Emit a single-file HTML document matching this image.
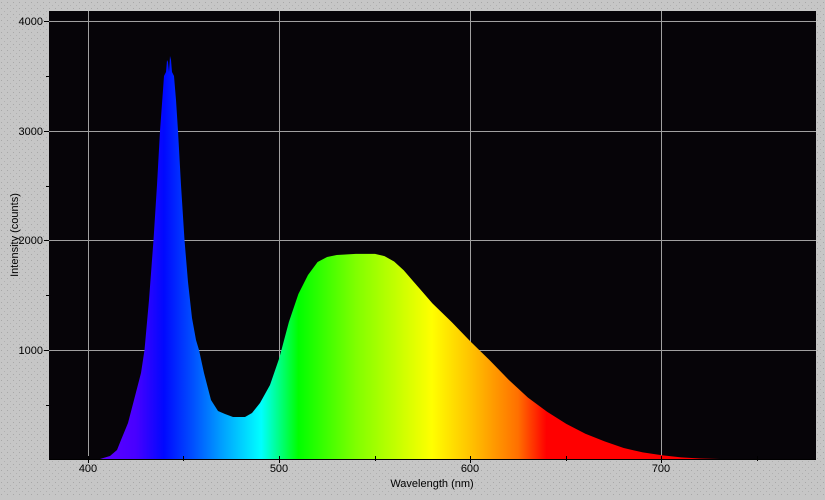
<!DOCTYPE html>
<html><head><style>
html,body{margin:0;padding:0;}
body{width:825px;height:495px;background:#c6c6c6;overflow:hidden;font-family:"Liberation Sans",sans-serif;}
</style></head><body>
<svg width="825" height="495" viewBox="0 0 825 495" xmlns="http://www.w3.org/2000/svg">
<defs>
<pattern id="dots" width="6" height="6" patternUnits="userSpaceOnUse">
<rect width="6" height="6" fill="#c6c6c6"/><rect x="1" y="2" width="1" height="1" fill="#a8a8a8"/><rect x="4" y="5" width="1" height="1" fill="#b0b0b0"/>
</pattern>
<linearGradient id="spec" gradientUnits="userSpaceOnUse" x1="100" y1="0" x2="720" y2="0">
<stop offset="0" stop-color="#6000ff"/>
<stop offset="0.058" stop-color="#4800ff"/>
<stop offset="0.103" stop-color="#0008ff"/>
<stop offset="0.150" stop-color="#0050ff"/>
<stop offset="0.197" stop-color="#00a0ff"/>
<stop offset="0.260" stop-color="#00ffff"/>
<stop offset="0.290" stop-color="#00ff80"/>
<stop offset="0.320" stop-color="#00ff00"/>
<stop offset="0.413" stop-color="#80ff00"/>
<stop offset="0.535" stop-color="#ffff00"/>
<stop offset="0.600" stop-color="#ffc000"/>
<stop offset="0.674" stop-color="#ff7000"/>
<stop offset="0.720" stop-color="#ff0000"/>
<stop offset="1" stop-color="#ff0000"/>
</linearGradient>
</defs>
<rect width="825" height="495" fill="url(#dots)"/>
<rect x="49" y="11" width="767" height="448" fill="#060408"/>
<g stroke="#a0a0a0" stroke-width="1">
<line x1="88.5" y1="11" x2="88.5" y2="459"/>
<line x1="279.5" y1="11" x2="279.5" y2="459"/>
<line x1="470.5" y1="11" x2="470.5" y2="459"/>
<line x1="661.5" y1="11" x2="661.5" y2="459"/>
<line x1="49" y1="21.5" x2="816" y2="21.5"/>
<line x1="49" y1="131.5" x2="816" y2="131.5"/>
<line x1="49" y1="240.5" x2="816" y2="240.5"/>
<line x1="49" y1="350.5" x2="816" y2="350.5"/>
</g>
<path fill="url(#spec)" d="M100 459 L110 456 L117 450 L121 440 L128 423 L134 400 L141 373 L144.5 350 L149 300 L153.5 240 L157 185 L160 131 L163 90 L164 76 L166 72 L167 60 L168 62 L169 72 L170 56 L171 60 L172 72 L174 76 L176 100 L178 131 L181 185 L184.5 240 L188 282 L192 318 L196 340 L199 350 L204 373 L211 400 L218 411 L225 414 L233 417 L245 417 L252 413 L260 403 L270 385 L279.3 358 L288.9 322 L298.4 294 L308 275 L317.6 262 L327.1 257 L336.7 255 L355.8 253.9 L375 253.9 L384.5 256.1 L394.1 261.5 L403.7 270.3 L413.2 281.3 L422.8 292.3 L432.3 303.2 L451.5 321.9 L470.6 341.6 L489.7 360.3 L508.9 380 L528 397.6 L547.1 411.8 L566.3 423.9 L585.4 433.8 L604.6 441.4 L623.7 448 L642.8 452.4 L662 455.2 L681.1 457.4 L700.2 458.5 L719.4 459 Z"/>
<g stroke="#000" stroke-width="1">
<line x1="49" y1="459.5" x2="816" y2="459.5"/>
<line x1="44" y1="21.5" x2="49" y2="21.5"/>
<line x1="44" y1="131.5" x2="49" y2="131.5"/>
<line x1="44" y1="240.5" x2="49" y2="240.5"/>
<line x1="44" y1="350.5" x2="49" y2="350.5"/>
<line x1="46" y1="76.5" x2="49" y2="76.5"/>
<line x1="46" y1="186.5" x2="49" y2="186.5"/>
<line x1="46" y1="295.5" x2="49" y2="295.5"/>
<line x1="46" y1="405.5" x2="49" y2="405.5"/>
<line x1="88.5" y1="456" x2="88.5" y2="463"/>
<line x1="279.5" y1="456" x2="279.5" y2="463"/>
<line x1="470.5" y1="456" x2="470.5" y2="463"/>
<line x1="661.5" y1="456" x2="661.5" y2="463"/>
<line x1="183.5" y1="456" x2="183.5" y2="461"/>
<line x1="375.5" y1="456" x2="375.5" y2="461"/>
<line x1="566.5" y1="456" x2="566.5" y2="461"/>
<line x1="757.5" y1="456" x2="757.5" y2="461"/>
</g>
<g font-size="11" fill="#000" text-anchor="end">
<text x="43" y="25">4000</text>
<text x="43" y="135">3000</text>
<text x="43" y="244">2000</text>
<text x="43" y="354">1000</text>
</g>
<g font-size="11" fill="#000" text-anchor="middle">
<text x="88" y="472">400</text>
<text x="279" y="472">500</text>
<text x="470" y="472">600</text>
<text x="661" y="472">700</text>
<text x="432" y="487">Wavelength (nm)</text>
<text x="0" y="0" transform="translate(18 235) rotate(-90)">Intensity (counts)</text>
</g>
</svg>
</body></html>
